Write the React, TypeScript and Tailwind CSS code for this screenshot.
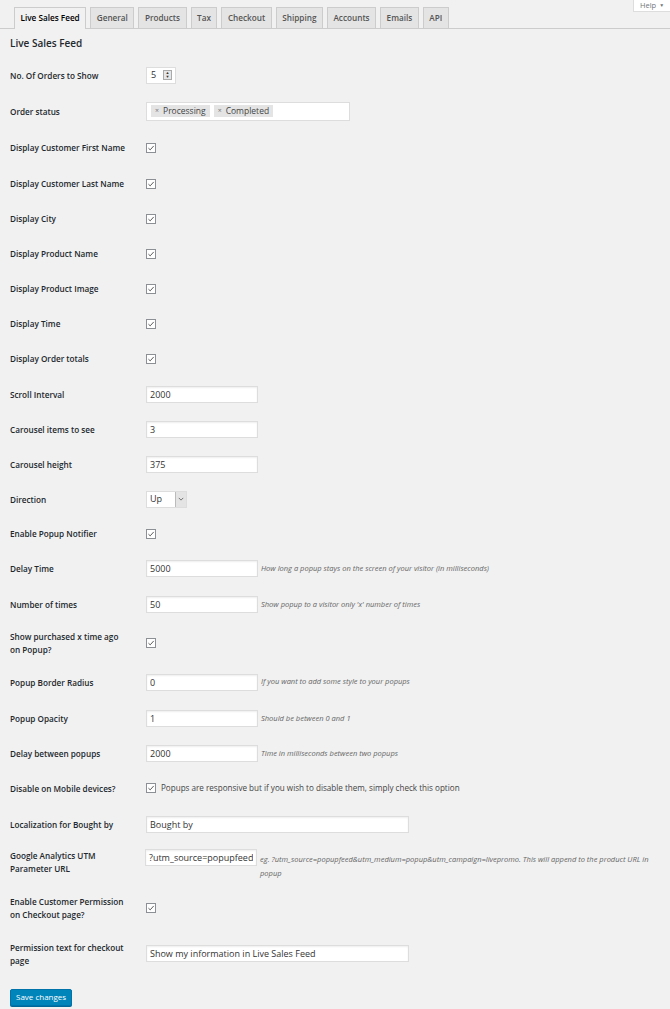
const tabs = ["Live Sales Feed", "General", "Products", "Tax", "Checkout", "Shipping", "Accounts", "Emails", "API"];

const Check = () => (
  <span className="inline-flex h-[10px] w-[10px] items-center justify-center border border-[#8c8f94] bg-white">
    <svg viewBox="0 0 10 10" className="h-[8px] w-[8px]">
      <path d="M1.8 5.2 L4 7.3 L8.4 2.4" fill="none" stroke="#555" strokeWidth="1.2" />
    </svg>
  </span>
);

const TextInput = ({ value, w = "w-[112px]" }: { value: string; w?: string }) => (
  <input
    readOnly
    value={value}
    className={`${w} h-[17px] border border-[#ddd] bg-white px-[3px] text-[9px] text-[#333] shadow-[inset_0_1px_2px_rgba(0,0,0,0.07)] outline-none`}
  />
);

const Desc = ({ children }: { children: React.ReactNode }) => (
  <span className="ml-[3px] text-[7.5px] italic text-[#666]">{children}</span>
);

const Row = ({
  label,
  h,
  top,
  children,
}: {
  label: React.ReactNode;
  h: string;
  top?: boolean;
  children?: React.ReactNode;
}) => (
  <div className={`flex ${h} ${top ? "items-start pt-[6px]" : "items-center"}`}>
    <div className="w-[136px] pr-[6px] text-[8.2px] font-semibold leading-[13px] text-[#23282d]">{label}</div>
    <div className="flex flex-1 items-center">{children}</div>
  </div>
);

export default function App() {
  return (
    <div className="min-h-[1009px] w-[670px] bg-[#f1f1f1] font-['Open_Sans',sans-serif] text-[#444]">
      {/* help tab */}
      <div className="flex justify-end">
        <div className="flex h-[12px] w-[37px] items-center justify-center gap-[3px] border-b border-l border-[#ddd] bg-white text-[7.5px] text-[#72777c]">
          Help <span className="text-[5px]">▼</span>
        </div>
      </div>

      {/* tabs */}
      <div className="flex h-[17px] items-end gap-[4px] border-b border-[#ccc] pl-[14px]">
        {tabs.map((t, i) => (
          <div
            key={t}
            className={
              i === 0
                ? "-mb-px flex h-[22px] items-center border border-b-0 border-[#ccc] bg-[#f1f1f1] px-[5.5px] text-[8.2px] font-semibold text-[#000]"
                : "flex h-[21px] items-center border border-b-0 border-[#ccc] bg-[#e4e4e4] px-[5.5px] text-[8.2px] font-semibold text-[#555]"
            }
          >
            {t}
          </div>
        ))}
      </div>

      <div className="px-[10px]">
        <div className="flex h-[28px] items-center text-[10px] font-semibold text-[#23282d]">Live Sales Feed</div>

        <Row label="No. Of Orders to Show" h="h-[36px]">
          <div className="flex h-[17px] w-[30px] items-center justify-between border border-[#ddd] bg-white pl-[4px] pr-[3px] text-[9px] text-[#333]">
            5
            <span className="flex h-[10px] w-[9px] flex-col items-center justify-center border border-[#aaa] bg-[#e6e6e6] text-[4px] leading-[4px] text-[#333]">
              <span>▲</span>
              <span>▼</span>
            </span>
          </div>
        </Row>

        <Row label="Order status" h="h-[36px]">
          <div className="flex h-[19px] w-[204px] items-center gap-[4px] border border-[#ddd] bg-white pl-[4px] text-[8.5px] text-[#444]">
            <span className="flex h-[12px] items-center gap-[4px] bg-[#e4e4e4] px-[4px]">
              <span className="text-[7px] text-[#777]">×</span>Processing
            </span>
            <span className="flex h-[12px] items-center gap-[4px] bg-[#e4e4e4] px-[4px]">
              <span className="text-[7px] text-[#777]">×</span>Completed
            </span>
          </div>
        </Row>

        <Row label="Display Customer First Name" h="h-[37px]"><Check /></Row>
        <Row label="Display Customer Last Name" h="h-[35px]"><Check /></Row>
        <Row label="Display City" h="h-[35px]"><Check /></Row>
        <Row label="Display Product Name" h="h-[35px]"><Check /></Row>
        <Row label="Display Product Image" h="h-[35px]"><Check /></Row>
        <Row label="Display Time" h="h-[35px]"><Check /></Row>
        <Row label="Display Order totals" h="h-[35px]"><Check /></Row>

        <Row label="Scroll Interval" h="h-[36px]"><TextInput value="2000" /></Row>
        <Row label="Carousel items to see" h="h-[35px]"><TextInput value="3" /></Row>
        <Row label="Carousel height" h="h-[35px]"><TextInput value="375" /></Row>

        <Row label="Direction" h="h-[34px]">
          <div className="flex h-[17px] w-[41px] items-stretch border border-[#ddd] bg-white text-[9px] text-[#333]">
            <span className="flex flex-1 items-center pl-[3px]">Up</span>
            <span className="flex w-[11px] items-center justify-center border-l border-[#bbb] bg-[#e4e4e4]">
              <svg viewBox="0 0 8 8" className="h-[6px] w-[6px]">
                <path d="M1 2.5 L4 5.5 L7 2.5" fill="none" stroke="#666" strokeWidth="1.2" />
              </svg>
            </span>
          </div>
        </Row>

        <Row label="Enable Popup Notifier" h="h-[35px]"><Check /></Row>

        <Row label="Delay Time" h="h-[35px]">
          <TextInput value="5000" />
          <Desc>How long a popup stays on the screen of your visitor (in milliseconds)</Desc>
        </Row>
        <Row label="Number of times" h="h-[37px]">
          <TextInput value="50" />
          <Desc>Show popup to a visitor only 'x' number of times</Desc>
        </Row>

        <Row label={<>Show purchased x time ago<br />on Popup?</>} h="h-[40px]">
          <span className="-mt-[4px]"><Check /></span>
        </Row>

        <Row label="Popup Border Radius" h="h-[38px]">
          <TextInput value="0" />
          <Desc>If you want to add some style to your popups</Desc>
        </Row>
        <Row label="Popup Opacity" h="h-[35px]">
          <TextInput value="1" />
          <Desc>Should be between 0 and 1</Desc>
        </Row>
        <Row label="Delay between popups" h="h-[35px]">
          <TextInput value="2000" />
          <Desc>Time in milliseconds between two popups</Desc>
        </Row>

        <Row label="Disable on Mobile devices?" h="h-[34px]">
          <Check />
          <span className="ml-[5px] text-[8.1px] text-[#444]">
            Popups are responsive but if you wish to disable them, simply check this option
          </span>
        </Row>

        <Row label="Localization for Bought by" h="h-[38px]">
          <TextInput value="Bought by" w="w-[263px]" />
        </Row>

        <Row label={<>Google Analytics UTM<br />Parameter URL</>} h="h-[42px]" top>
          <div className="flex items-start">
            <TextInput value="?utm_source=popupfeed&utm_medium=popup" />
            <span className="ml-[3px] mt-[3px] w-[400px] text-[7.5px] italic leading-[14px] text-[#666]">
              eg. ?utm_source=popupfeed&amp;utm_medium=popup&amp;utm_campaign=livepromo. This will append to the product URL in popup
            </span>
          </div>
        </Row>

        <Row label={<>Enable Customer Permission<br />on Checkout page?</>} h="h-[46px]">
          <span className="-mt-[4px]"><Check /></span>
        </Row>

        <Row label={<>Permission text for checkout<br />page</>} h="h-[45px]">
          <TextInput value="Show my information in Live Sales Feed" w="w-[263px]" />
        </Row>

        <div className="flex h-[42px] items-center">
          <button className="flex h-[17px] items-center rounded-[2px] border border-[#0073aa] bg-[#0085ba] px-[5px] text-[8px] text-white shadow-[0_1px_0_#006799]">
            Save changes
          </button>
        </div>
      </div>
    </div>
  );
}
